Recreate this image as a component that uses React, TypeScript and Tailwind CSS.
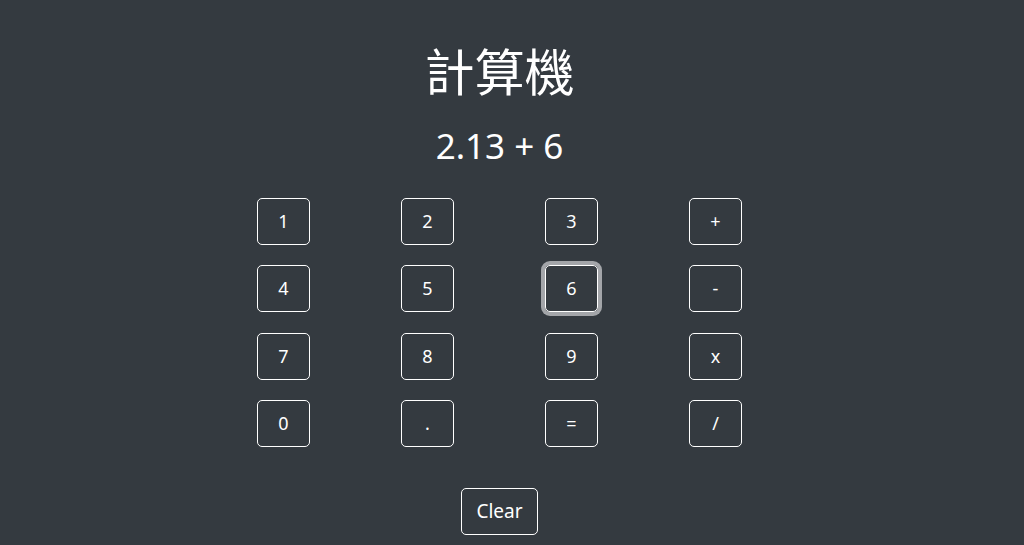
import { useState } from 'react';

const keys = ['1', '2', '3', '+', '4', '5', '6', '-', '7', '8', '9', 'x', '0', '.', '=', '/'];

export default function App() {
  const [display] = useState('2.13 + 6');
  const focused = '6';

  return (
    <div
      className="min-h-[545px] w-full bg-[#343a40] text-white"
      style={{ fontFamily: '"Noto Sans", "Noto Sans CJK TC", sans-serif' }}
    >
      <div className="w-[999px] flex flex-col items-center pt-[42px]">
        <h1 className="text-[50px] leading-[60px] font-normal">計算機</h1>
        <div className="mt-[22px] text-[35px] leading-[44px]">{display}</div>

        {/* keypad */}
        <div className="mt-[30px] grid grid-cols-4 w-[576px] gap-y-[20.4px]">
          {keys.map((k) => (
            <div key={k} className="flex justify-center">
              <button
                type="button"
                className={`w-[53px] h-[47px] border border-white rounded-[5px] text-[18px] text-white flex items-center justify-center ${
                  k === focused ? 'shadow-[0_0_0_4px_rgba(200,202,204,0.75)]' : ''
                }`}
              >
                {k}
              </button>
            </div>
          ))}
        </div>

        <button
          type="button"
          className="mt-[41px] w-[77px] h-[47px] border border-white rounded-[5px] text-[19px] text-white flex items-center justify-center"
        >
          Clear
        </button>
      </div>
    </div>
  );
}
